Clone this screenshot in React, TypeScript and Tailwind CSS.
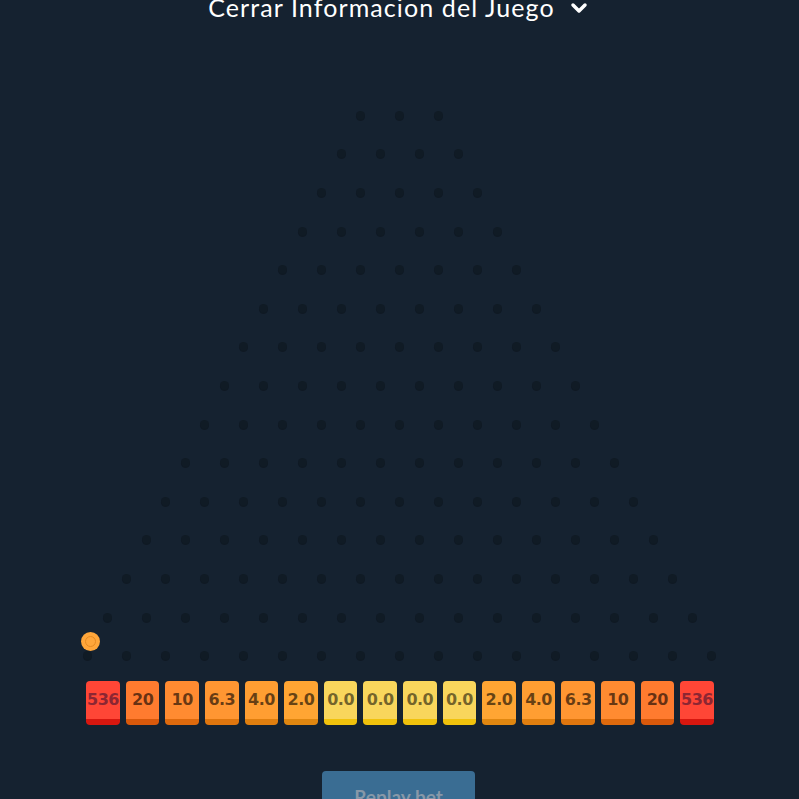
import { ChevronDown } from 'lucide-react';

const rows = Array.from({ length: 15 }, (_, i) => i + 3);

const buckets = [
  { label: '536', cls: 'bg-[#ff4636] border-[#d8170f] text-[#8c2633]' },
  { label: '20', cls: 'bg-[#ff7b2f] border-[#d9590b] text-black/60' },
  { label: '10', cls: 'bg-[#ff8b31] border-[#de6a0d] text-black/60' },
  { label: '6.3', cls: 'bg-[#ff9632] border-[#df760e] text-black/60' },
  { label: '4.0', cls: 'bg-[#ff9e32] border-[#e07f0f] text-black/60' },
  { label: '2.0', cls: 'bg-[#ffa533] border-[#e08710] text-black/60' },
  { label: '0.0', cls: 'bg-[#f9d65c] border-[#f1c20c] text-black/55' },
  { label: '0.0', cls: 'bg-[#f9d65c] border-[#f1c20c] text-black/55' },
  { label: '0.0', cls: 'bg-[#f9d65c] border-[#f1c20c] text-black/55' },
  { label: '0.0', cls: 'bg-[#f9d65c] border-[#f1c20c] text-black/55' },
  { label: '2.0', cls: 'bg-[#ffa533] border-[#e08710] text-black/60' },
  { label: '4.0', cls: 'bg-[#ff9e32] border-[#e07f0f] text-black/60' },
  { label: '6.3', cls: 'bg-[#ff9632] border-[#df760e] text-black/60' },
  { label: '10', cls: 'bg-[#ff8b31] border-[#de6a0d] text-black/60' },
  { label: '20', cls: 'bg-[#ff7b2f] border-[#d9590b] text-black/60' },
  { label: '536', cls: 'bg-[#ff4636] border-[#d8170f] text-[#8c2633]' },
];

export default function App() {
  return (
    <div className="relative h-[799px] w-[799px] overflow-hidden bg-[#152230] font-['Lato',sans-serif]">
      <div className="-mt-[7px] flex items-center justify-center gap-3 text-white">
        <span className="text-[25px] leading-[28px] tracking-[1.1px]">Cerrar Informacion del Juego</span>
        <ChevronDown size={24} strokeWidth={3.5} className="mt-[2px]" />
      </div>

      <div className="mt-[75px] flex flex-col">
        {rows.map((count) => (
          <div key={count} className="flex h-[38.6px] items-center justify-center gap-[30px]">
            {Array.from({ length: count }, (_, j) => (
              <span
                key={j}
                className="h-[9px] w-[9px] rounded-full bg-[#101b25] shadow-[0_1px_0_rgba(0,0,0,0.25)]"
              />
            ))}
          </div>
        ))}
      </div>

      <div className="mt-[6px] flex justify-center gap-[6.1px] pl-[1px]">
        {buckets.map((b, i) => (
          <div
            key={i}
            className={`flex h-[44px] w-[33.5px] items-center justify-center rounded-[4px] border-b-[6px] pt-[1px] font-['DejaVu_Sans',sans-serif] text-[16px] font-bold tracking-[-0.5px] ${b.cls}`}
          >
            {b.label}
          </div>
        ))}
      </div>

      <div className="mt-[46px] flex justify-center">
        <button
          type="button"
          className="ml-[-2px] h-[46px] w-[153px] rounded-[4px] bg-[#3a6d93] pt-[6px] text-[19px] font-bold text-[#8798a8]"
        >
          Replay bet
        </button>
      </div>

      <div className="absolute left-[80.5px] top-[631.5px] flex h-[19px] w-[19px] items-center justify-center rounded-full bg-[#ffa63a]">
        <span className="h-[11px] w-[11px] rounded-full border-[1.5px] border-[#e68a22]" />
      </div>
    </div>
  );
}
